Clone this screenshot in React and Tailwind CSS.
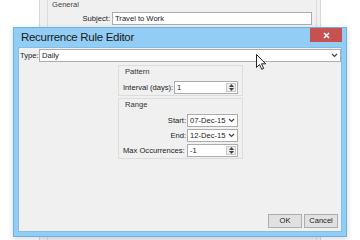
import React from "react";

function Chevron() {
  return (
    <svg width="7" height="5" viewBox="0 0 7 5" fill="none">
      <path d="M1 1l2.5 2.5L6 1" stroke="#404040" strokeWidth="1.2" />
    </svg>
  );
}

function Select({ value, className = "" }) {
  return (
    <div className={"h-[13px] flex items-center justify-between bg-white border border-[#acacac] pl-[2px] pr-[2px] " + className}>
      <span className="leading-none whitespace-nowrap">{value}</span>
      <Chevron />
    </div>
  );
}

function Spin({ value, className = "" }) {
  return (
    <div className={"h-[13px] flex bg-white border border-[#abadb3] " + className}>
      <span className="flex-1 pl-[2px] leading-[11px]">{value}</span>
      <div className="w-[10px] my-[1px] mr-[1px] flex flex-col items-center justify-center gap-[1px] bg-[#ececec] border border-[#c9c9c9]">
        <svg width="5" height="3" viewBox="0 0 5 3"><path d="M0 3h5L2.5 0z" fill="#404040" /></svg>
        <svg width="5" height="3" viewBox="0 0 5 3"><path d="M0 0h5L2.5 3z" fill="#404040" /></svg>
      </div>
    </div>
  );
}

function Group({ title, className = "", children }) {
  return (
    <div className={"border border-[#dcdcdc] px-[4px] pt-[1px] " + className}>
      <div className="pl-[2px] leading-[10px] text-[#333]">{title}</div>
      {children}
    </div>
  );
}

export default function App() {
  return (
    <div className="relative w-[360px] h-[240px] bg-white overflow-hidden font-['Liberation_Sans',Arial,sans-serif] text-[7.6px] text-[#1a1a1a]">
      {/* window behind */}
      <div className="absolute left-[39px] top-0 w-[282px] h-[240px] bg-[#f0f0f0] border-l border-r border-[#d6d6d6] pl-[7px] pr-[3px]">
        <div className="h-full border-l border-r border-[#dcdcdc] pl-[4px]">
          <div className="leading-[9px] text-[#444]">General</div>
          <div className="flex items-center mt-[3px]">
            <span className="w-[60px] text-right pr-[2px] whitespace-nowrap">Subject:</span>
            <div className="w-[200px] h-[13px] bg-white border border-[#abadb3] pl-[2px] leading-[11px]">Travel to Work</div>
          </div>
        </div>
      </div>

      {/* dialog */}
      <div className="absolute left-[13px] top-[27px] w-[334px] h-[210px] flex flex-col bg-[#92cdf5] border border-[#6cb0e6] shadow-[0_2px_6px_rgba(0,0,0,0.15)]">
        <div className="relative h-[19px] flex items-center pl-[7px] text-[11.5px] tracking-[-0.3px] text-[#1b1b1b]">
          Recurrence Rule Editor
          <div className="absolute right-[4px] top-0 w-[32px] h-[14px] bg-[#c75050] flex items-center justify-center">
            <svg width="7" height="7" viewBox="0 0 7 7"><path d="M1 1l5 5M6 1L1 6" stroke="#fff" strokeWidth="1.6" /></svg>
          </div>
        </div>
        <div className="flex-1 mx-[4px] mb-[4px] bg-[#f0f0f0] border border-[#84bde6] flex flex-col pl-[1px] pt-[1px] pb-[3px]">
          <div className="flex items-center h-[13px]">
            <span className="w-[19px] shrink-0">Type:</span>
            <Select value="Daily" className="flex-1" />
          </div>
          <div className="ml-[98px] w-[125px] mt-[3px]">
            <Group title="Pattern" className="h-[31px]">
              <div className="flex items-center mt-[4px]">
                <span className="w-[51px] shrink-0 whitespace-nowrap">Interval (days):</span>
                <Spin value="1" className="w-[66px]" />
              </div>
            </Group>
            <Group title="Range" className="h-[61px] mt-[2px]">
              <div className="flex flex-col gap-[2px] mt-[4px]">
                <div className="flex items-center">
                  <span className="w-[64px] shrink-0 text-right pr-[1px]">Start:</span>
                  <Select value="07-Dec-15" className="w-[53px]" />
                </div>
                <div className="flex items-center">
                  <span className="w-[64px] shrink-0 text-right pr-[1px]">End:</span>
                  <Select value="12-Dec-15" className="w-[53px]" />
                </div>
                <div className="flex items-center">
                  <span className="w-[64px] shrink-0 whitespace-nowrap">Max Occurrences:</span>
                  <Spin value="-1" className="w-[53px]" />
                </div>
              </div>
            </Group>
          </div>
          <div className="mt-auto flex justify-end gap-[2px] pr-[3px]">
            <button type="button" className="w-[34px] h-[14px] bg-[#e1e1e1] border border-[#adadad] leading-none">OK</button>
            <button type="button" className="w-[34px] h-[14px] bg-[#e1e1e1] border border-[#adadad] leading-none">Cancel</button>
          </div>
        </div>
      </div>

      {/* mouse pointer */}
      <svg className="absolute left-[256px] top-[54px]" width="10" height="16" viewBox="0 0 10 16">
        <path d="M0.5 0.5v13l3-3 2.2 4.8 2-0.9-2.2-4.6h4.2z" fill="#fff" stroke="#222" strokeWidth="1" strokeLinejoin="round" />
      </svg>
    </div>
  );
}
